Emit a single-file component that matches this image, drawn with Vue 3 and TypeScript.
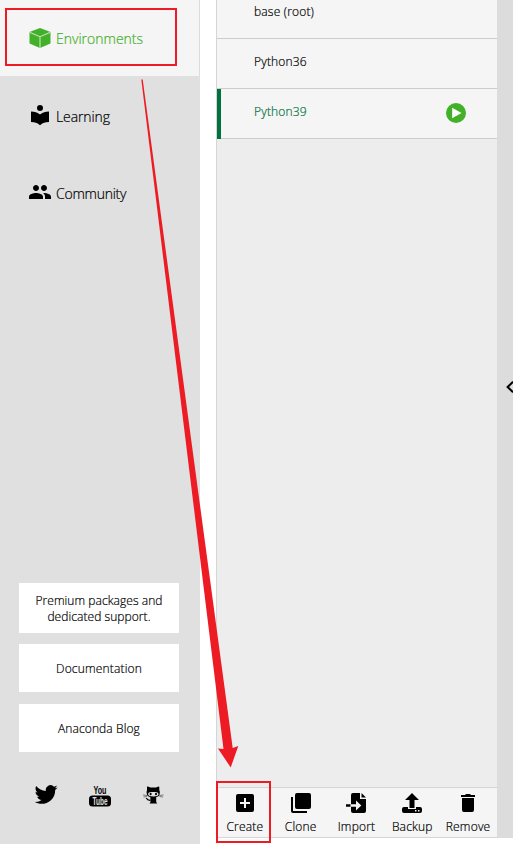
<script setup lang="ts">
interface Action { label: string; icon: string }

const environments: { name: string; active: boolean }[] = [
  { name: 'base (root)', active: false },
  { name: 'Python36', active: false },
  { name: 'Python39', active: true },
]

const actions: Action[] = [
  { label: 'Create', icon: 'M5 3H19Q21 3 21 5V19Q21 21 19 21H5Q3 21 3 19V5Q3 3 5 3ZM11 7V11H7V13H11V17H13V13H17V11H13V7Z' },
  { label: 'Clone', icon: 'M8 2H20Q22 2 22 4V16Q22 18 20 18H8Q6 18 6 16V4Q6 2 8 2ZM2 6H4V20H18V22H4Q2 22 2 20Z' },
  { label: 'Import', icon: 'M9 2H16V8H22V20Q22 22 20 22H9Q7 22 7 20V15.700H12V19.500L17.300 14.500L12 9.500V13.300H7V4Q7 2 9 2ZM17.500 2L22 6.500H17.500ZM2 13.300H6.500V15.700H2Z' },
  { label: 'Backup', icon: 'M12 2L19 9H14.500V17H9.500V9H5ZM4 16H8V18H16V16H20Q22 16 22 18V20Q22 22 20 22H4Q2 22 2 20V18Q2 16 4 16ZM15 19V20.500H16.500V19ZM18 19V20.500H19.500V19Z' },
  { label: 'Remove', icon: 'M5 4H9L10 3H14L15 4H19V6H5ZM6 7H18V19Q18 21 16 21H8Q6 21 6 19Z' },
]
</script>

<template>
  <div class="app">
    <aside class="sidebar">
      <nav>
        <a class="nav-item current">
          <svg class="nav-icon" viewBox="0 0 22 20">
            <path class="cube" d="M11 0L21.500 4V15.500L11 20L.5 15.500V4Z" />
            <path class="cube-edge" d="M.5 4.300L11 8.700L21.500 4.300M11 8.700V20" />
          </svg>
          <span>Environments</span>
        </a>
        <a class="nav-item learning">
          <svg class="nav-icon" viewBox="0 0 22 20">
            <circle cx="11" cy="3" r="3" />
            <path d="M2 6.500Q7.500 6.500 11 9.500Q14.500 6.500 20 6.500V17Q14.500 17 11 20.200Q7.500 17 2 17Z" />
          </svg>
          <span>Learning</span>
        </a>
        <a class="nav-item community">
          <svg class="nav-icon" viewBox="1 2 22 20">
            <path d="M16 11c1.660 0 2.990-1.340 2.990-3S17.660 5 16 5c-1.660 0-3 1.340-3 3s1.340 3 3 3zm-8 0c1.660 0 2.990-1.340 2.990-3S9.660 5 8 5C6.340 5 5 6.340 5 8s1.340 3 3 3zm0 2c-2.330 0-7 1.170-7 3.500V19h14v-2.500c0-2.330-4.670-3.500-7-3.500zm8 0c-.29 0-.62.02-.97.05 1.160.84 1.970 1.970 1.970 3.450V19h6v-2.500c0-2.330-4.670-3.500-7-3.500z" />
          </svg>
          <span>Community</span>
        </a>
      </nav>

      <div class="links">
        <a class="card premium"><span>Premium packages and</span><span>dedicated support.</span></a>
        <a class="card docs"><span>Documentation</span></a>
        <a class="card blog"><span>Anaconda Blog</span></a>
      </div>

      <div class="social">
        <svg class="twitter" viewBox="0 0 24 20">
          <path d="M23.600 2.400c-.85.380-1.750.62-2.700.74.970-.59 1.700-1.500 2.050-2.600-.9.540-1.900.92-2.970 1.130A4.730 4.730 0 0 0 11.900 6C8 5.800 4.500 3.900 2.200 1.100c-1.300 2.200-.6 5 1.460 6.350-.77-.02-1.500-.24-2.130-.6 0 2.300 1.570 4.250 3.770 4.700-.7.190-1.430.21-2.130.08.6 1.880 2.350 3.240 4.420 3.280A9.500 9.500 0 0 1 .6 16.800C8.600 21.900 21.200 17 21.200 4.900c.94-.68 1.750-1.530 2.400-2.500Z" />
        </svg>
        <svg class="youtube" viewBox="0 0 22 24">
          <text x="4.500" y="9" textLength="13" lengthAdjust="spacingAndGlyphs">You</text>
          <rect x="0" y="10.500" width="22" height="11" rx="3.500" />
          <text x="3.500" y="19.500" textLength="15" lengthAdjust="spacingAndGlyphs" class="yt-box">Tube</text>
        </svg>
        <svg class="github" viewBox="0 0 22 19">
          <path d="M5 1Q5 .2 6 .5L8.500 1.600H14L16.500 .5Q17.300 .3 17.300 1.300V4Q18.500 6 17.500 9Q16.500 11.300 11.300 11.300Q6 11.300 5 9Q4 6 5 4Z" />
          <path class="face" d="M6 8Q6.500 5.700 9.500 6H13Q16 5.700 16.600 8Q16.500 10.500 11.300 10.500Q6.200 10.500 6 8Z" />
          <ellipse cx="8.600" cy="8" rx="1" ry="1.300" /><ellipse cx="14" cy="8" rx="1" ry="1.300" />
          <path d="M8.300 11H14.200V16L15.200 17.500H7.500L8.500 16Z" />
          <path class="tail" d="M4.300 12Q5.500 14.500 8.500 14.300" />
          <path class="whisker" d="M1 9L5 9.500M1.500 11L5 10.500M17.500 9.500L21.500 9M17.500 10.500L21 11" />
        </svg>
      </div>
    </aside>

    <main class="workspace">
      <section class="panel">
        <ul class="env-list">
          <li v-for="env in environments" :key="env.name" :class="['env', { selected: env.active }]">
            <span>{{ env.name }}</span>
            <svg v-if="env.active" class="play" viewBox="0 0 20 20">
              <circle cx="10" cy="10" r="10" /><path d="M6.200 4.800L15.500 10L6.200 15.200Z" />
            </svg>
          </li>
        </ul>
        <footer class="toolbar">
          <button v-for="action in actions" :key="action.label" class="tool">
            <svg viewBox="0 0 24 24"><path fill-rule="evenodd" :d="action.icon" /></svg>
            <span>{{ action.label }}</span>
          </button>
        </footer>
      </section>
      <div class="collapse"><svg viewBox="0 0 7 12"><path d="M7 .8L1.600 6L7 11.200" /></svg></div>
    </main>

    <svg class="annotations" viewBox="0 0 513 844">
      <rect x="6" y="9" width="170" height="56" />
      <rect x="217" y="782" width="53" height="60" />
      <path d="M141.300 79.500L142.700 79.500L232.700 748L238.300 746L230.700 767.500L218 748.500L223.500 749Z" />
    </svg>
  </div>
</template>

<style>
body { margin: 0; background: #fff; overflow: hidden; }
</style>

<style scoped>
.app { position: relative; display: flex; width: 513px; height: 844px; font: 300 12px/16px "Open Sans", "Noto Sans", sans-serif; color: #000; white-space: nowrap; -webkit-text-stroke: .2px currentColor; }
svg { display: block; flex: none; }
.sidebar { display: flex; flex-direction: column; width: 200px; background: #e0e0e0; }
nav { height: 583px; }
.nav-item { display: flex; align-items: center; gap: 5px; height: 77px; padding-left: 29px; box-sizing: border-box; font-size: 14px; line-height: 20px; }
.nav-icon { width: 22px; height: 20px; overflow: visible; }
.nav-item span { padding-top: 4px; }
.current { height: 76px; background: #f5f5f5; border-right: 1px solid #dcdcdc; color: #43b02a; }
.current span { padding-top: 2px; }
.learning { padding-top: 1px; letter-spacing: -.1px; }
.community { padding-top: 1px; letter-spacing: -.25px; }
.cube { fill: #43b02a; }
.cube-edge { fill: none; stroke: #c2e6ba; stroke-width: 1.1; }
.links { display: flex; flex-direction: column; padding: 0 21px 0 19px; }
.card { display: flex; flex-direction: column; align-items: center; justify-content: center; height: 48px; padding-top: 2px; box-sizing: border-box; background: #fff; }
.premium { height: 50px; margin-bottom: 11px; letter-spacing: .06px; }
.docs { margin-bottom: 12px; letter-spacing: .17px; }
.blog { letter-spacing: .1px; }
.social { display: flex; padding: 33px 0 0 34px; }
.twitter { width: 24px; height: 20px; }
.youtube { width: 22px; height: 24px; margin-left: 31px; overflow: visible; }
.youtube text { font: 700 10px "Liberation Sans Narrow", "Liberation Sans", sans-serif; }
.youtube .yt-box { fill: #e0e0e0; }
.github { width: 22px; height: 19px; margin: 1px 0 0 31px; }
.face { fill: #e0e0e0; }
.tail { fill: none; stroke: #000; stroke-width: 1.2; }
.whisker { fill: none; stroke: #333; stroke-width: .6; }
.workspace { display: flex; width: 297px; height: 838px; padding-left: 16px; }
.panel { display: flex; flex-direction: column; width: 280px; border-left: 1px solid #d5d5d5; background: #ededed; }
.env-list { list-style: none; margin: -11px 0 0; padding: 0; flex: 1; }
.env { display: flex; align-items: center; justify-content: space-between; height: 50px; box-sizing: border-box; padding: 0 31px 0 37px; border-bottom: 1px solid #ccc; background: #f5f5f5; letter-spacing: .18px; }
.env span { padding-bottom: 3px; }
.selected { position: relative; padding-left: 37px; color: #00713f; }
.selected::before { content: ""; position: absolute; left: 0; top: 0; width: 4px; height: 50px; background: #00713f; }
.play { width: 20px; height: 20px; margin-bottom: 1px; fill: #43b02a; }
.play path { fill: #fff; }
.toolbar { display: flex; height: 51px; box-sizing: border-box; border: solid #d5d5d5; border-width: 1px 0; background: #f5f5f5; }
.tool { display: flex; flex-direction: column; align-items: center; flex: none; width: 55.8px; padding: 3px 0 0; border: 0; background: none; font: inherit; color: inherit; letter-spacing: .2px; }
.tool span { margin-top: 4px; }
.tool svg { width: 24px; height: 24px; }
.collapse { display: flex; align-items: center; justify-content: flex-end; width: 16px; box-sizing: border-box; padding-bottom: 65px; background: #dcdcdc; }
.collapse svg { width: 7px; height: 12px; }
.collapse path { fill: none; stroke: #000; stroke-width: 2; }
.annotations { position: absolute; inset: 0; width: 513px; height: 844px; pointer-events: none; }
.annotations rect { fill: none; stroke: #ed1c24; stroke-width: 2; }
.annotations path { fill: #ed1c24; }
</style>
